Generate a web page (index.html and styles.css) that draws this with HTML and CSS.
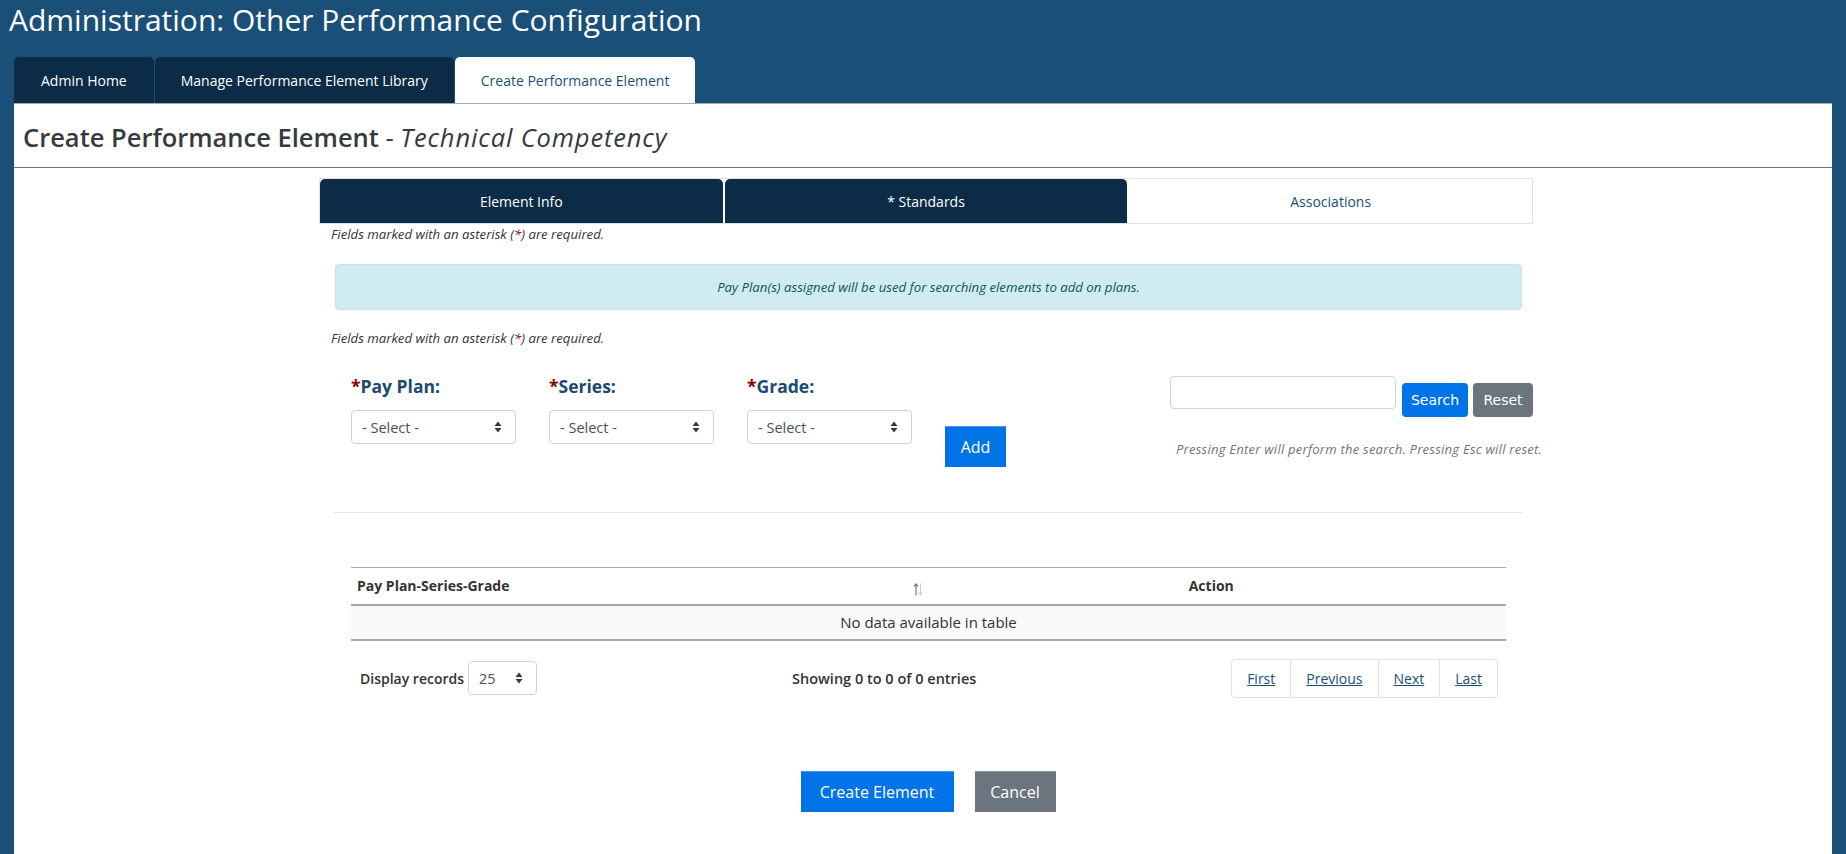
FILE: index.html
```html
<!DOCTYPE html>
<html lang="en">
<head>
<meta charset="utf-8">
<title>Administration: Other Performance Configuration</title>
<link rel="stylesheet" href="styles.css">
</head>
<body>
<header class="app-header">
  <h1 class="app-title">Administration: Other Performance Configuration</h1>
  <nav class="main-tabs">
    <a class="main-tab" href="#">Admin Home</a>
    <a class="main-tab" href="#">Manage Performance Element Library</a>
    <a class="main-tab active" href="#">Create Performance Element</a>
  </nav>
</header>

<main class="panel">
  <h2 class="panel-heading">Create Performance Element <span class="dash">-</span> <em>Technical Competency</em></h2>

  <section class="wizard">
    <nav class="step-tabs">
      <a class="step-tab done" href="#">Element Info</a>
      <a class="step-tab done" href="#">* Standards</a>
      <a class="step-tab" href="#">Associations</a>
    </nav>

    <p class="required-note first">Fields marked with an asterisk (<span class="req">*</span>) are required.</p>

    <div class="alert-info">Pay Plan(s) assigned will be used for searching elements to add on plans.</div>

    <p class="required-note second">Fields marked with an asterisk (<span class="req">*</span>) are required.</p>

    <div class="filter-row">
      <div class="field">
        <label class="field-label" for="payPlan"><span class="req">*</span>Pay Plan:</label>
        <div class="select-wrap">
          <select id="payPlan" class="form-select"><option>- Select -</option></select>
          <svg class="caret" width="8" height="12" viewBox="0 0 8 12"><path d="M4 0.5 L7.5 5 H0.5 Z M0.5 7 H7.5 L4 11.5 Z" fill="#343a40"/></svg>
        </div>
      </div>
      <div class="field">
        <label class="field-label" for="series"><span class="req">*</span>Series:</label>
        <div class="select-wrap">
          <select id="series" class="form-select"><option>- Select -</option></select>
          <svg class="caret" width="8" height="12" viewBox="0 0 8 12"><path d="M4 0.5 L7.5 5 H0.5 Z M0.5 7 H7.5 L4 11.5 Z" fill="#343a40"/></svg>
        </div>
      </div>
      <div class="field">
        <label class="field-label" for="grade"><span class="req">*</span>Grade:</label>
        <div class="select-wrap">
          <select id="grade" class="form-select"><option>- Select -</option></select>
          <svg class="caret" width="8" height="12" viewBox="0 0 8 12"><path d="M4 0.5 L7.5 5 H0.5 Z M0.5 7 H7.5 L4 11.5 Z" fill="#343a40"/></svg>
        </div>
      </div>
      <button class="btn btn-primary btn-add" type="button">Add</button>

      <div class="search-group">
        <div class="search-line">
          <input class="search-input" type="text" aria-label="Search">
          <button class="btn-sm btn-primary" type="button">Search</button>
          <button class="btn-sm btn-secondary" type="button">Reset</button>
        </div>
        <p class="search-hint">Pressing Enter will perform the search. Pressing Esc will reset.</p>
      </div>
    </div>

    <hr class="divider">

    <table class="grid">
      <thead>
        <tr>
          <th class="col-main">
            <div class="th-inner">
              <span>Pay Plan-Series-Grade</span>
              <svg class="sort" width="10" height="13" viewBox="0 0 10 13">
                <path d="M3 12.5 V1.5 M1 3.5 L3 1 L5 3.5" stroke="#6f6f6f" stroke-width="1.1" fill="none"/>
                <path d="M7.5 0.5 V11.5 M5.5 9.5 L7.5 12 L9.5 9.5" stroke="#c9ced3" stroke-width="1.1" fill="none"/>
              </svg>
            </div>
          </th>
          <th class="col-action">Action</th>
        </tr>
      </thead>
      <tbody>
        <tr class="empty-row"><td colspan="2">No data available in table</td></tr>
      </tbody>
    </table>

    <div class="table-footer">
      <div class="page-length">
        <span>Display records</span>
        <div class="select-wrap small">
          <select class="form-select"><option>25</option></select>
          <svg class="caret" width="8" height="12" viewBox="0 0 8 12"><path d="M4 0.5 L7.5 5 H0.5 Z M0.5 7 H7.5 L4 11.5 Z" fill="#343a40"/></svg>
        </div>
      </div>
      <div class="page-info">Showing 0 to 0 of 0 entries</div>
      <nav class="pager">
        <a href="#">First</a>
        <a href="#">Previous</a>
        <a href="#">Next</a>
        <a href="#">Last</a>
      </nav>
    </div>

    <div class="form-actions">
      <button class="btn btn-primary btn-create" type="button">Create Element</button>
      <button class="btn btn-secondary btn-cancel" type="button">Cancel</button>
    </div>
  </section>
</main>
</body>
</html>
```

FILE: styles.css
```css
* {
  box-sizing: border-box;
}

html,
body {
  height: 100%;
}

body {
  margin: 0;
  display: flex;
  flex-direction: column;
  background: #1a5077;
  font-family: "Open Sans", "Noto Sans", sans-serif;
  color: #333;
}

/* ---------- header ---------- */
.app-title {
  margin: 0;
  padding-left: 9px;
  font-size: 30px;
  font-weight: 400;
  line-height: 40px;
  color: #fff;
}

.main-tabs {
  display: flex;
  margin: 17px 0 0 14px;
}

.main-tab {
  height: 46px;
  padding: 0 26px;
  display: flex;
  align-items: center;
  background: #0b2b46;
  color: #fff;
  font-size: 14px;
  text-decoration: none;
  border-radius: 5px 5px 0 0;
}

.main-tab + .main-tab {
  margin-left: 1px;
}

.main-tab:first-child {
  padding: 0 27px;
}

.main-tab.active {
  background: #fff;
  color: #1a4f78;
}

/* ---------- panel ---------- */
.panel {
  flex: 1;
  margin: 0 14px;
  background: #fff;
  border-top: 1px solid #a3acb4;
}

.panel-heading {
  margin: 0;
  padding: 16px 9px 12px;
  font-size: 25.5px;
  font-weight: 600;
  line-height: 35px;
  color: #343a40;
  border-bottom: 1px solid #6c757d;
}

.panel-heading .dash,
.panel-heading em {
  font-weight: 400;
}

.panel-heading em {
  letter-spacing: 0.85px;
}

.wizard {
  width: 1214px;
  margin: 10px 0 0 305px;
}

/* ---------- step tabs ---------- */
.step-tabs {
  display: flex;
  gap: 2px;
  border: 1px solid #dee2e6;
}

.step-tab {
  flex: 1;
  height: 44px;
  display: flex;
  align-items: center;
  justify-content: center;
  font-size: 14px;
  color: #1a4f78;
  text-decoration: none;
  background: #fff;
  border-radius: 5px 5px 0 0;
}

.step-tab.done {
  background: #0b2b46;
  color: #fff;
}

/* ---------- notes & alert ---------- */
.required-note {
  margin: 0;
  padding-left: 12px;
  font-size: 13.2px;
  font-style: italic;
  line-height: 20px;
  color: #333;
}

.required-note.second {
  margin-top: 18px;
}

.req {
  color: #8b0000;
}

.alert-info {
  height: 46px;
  margin: 20px 11px 0 16px;
  display: flex;
  align-items: center;
  justify-content: center;
  background: #d1ecf1;
  border: 1px solid #bee5eb;
  border-radius: 4px;
  color: #0c5460;
  font-size: 13.2px;
  font-style: italic;
}

/* ---------- filter row ---------- */
.filter-row {
  display: flex;
  align-items: flex-start;
  gap: 33px;
  margin: 26px 0 0 32px;
}

.field {
  width: 165px;
}

.field-label {
  display: block;
  font-size: 17.5px;
  font-weight: 700;
  line-height: 24px;
  color: #1b4a71;
}

.select-wrap {
  position: relative;
  margin-top: 12px;
}

.form-select {
  display: block;
  width: 100%;
  height: 34px;
  padding: 0 26px 0 10px;
  appearance: none;
  -webkit-appearance: none;
  background: #fff;
  border: 1px solid #ced4da;
  border-radius: 4px;
  font-family: inherit;
  font-size: 14.5px;
  color: #495057;
}

.caret {
  position: absolute;
  right: 14px;
  top: 11px;
  pointer-events: none;
}

.btn {
  height: 41px;
  padding: 0 15px;
  border: 0;
  border-top: 1px solid rgba(255, 255, 255, 0.25);
  font-family: inherit;
  font-size: 16px;
  color: #fff;
  cursor: pointer;
}

.btn-primary {
  background: #0073e6;
}

.btn-secondary {
  background: #6c757d;
}

.btn-add {
  width: 61px;
  margin-top: 52px;
}

.search-group {
  margin-left: auto;
  width: 363px;
}

.search-line {
  display: flex;
  align-items: flex-start;
}

.search-input {
  width: 226px;
  height: 33px;
  margin-top: 2px;
  border: 1px solid #ced4da;
  border-radius: 4px;
}

.btn-sm {
  height: 34px;
  margin-top: 9px;
  border: 0;
  border-radius: 4px;
  font-family: "DejaVu Sans", sans-serif;
  font-size: 14px;
  color: #fff;
}

.btn-sm.btn-primary {
  width: 66px;
  margin-left: 6px;
}

.btn-sm.btn-secondary {
  width: 60px;
  margin-left: 5px;
}

.search-hint {
  margin: 23px 0 0;
  padding-left: 6px;
  white-space: nowrap;
  font-size: 13px;
  font-style: italic;
  letter-spacing: 0.25px;
  line-height: 18px;
  color: #6c757d;
}

.divider {
  margin: 45px 11px 0 15px;
  border: 0;
  border-top: 1px solid #e3e3e3;
}

/* ---------- table ---------- */
.grid {
  width: 1155px;
  margin: 54px 0 0 32px;
  border-collapse: collapse;
  border-top: 1px solid #a8a8a8;
  font-size: 14px;
}

.grid th {
  height: 37px;
  padding: 0 6px;
  font-weight: 700;
  text-align: left;
  color: #333;
  border-bottom: 2px solid #a8a8a8;
}

.col-main {
  width: 50%;
}

.th-inner {
  display: flex;
  align-items: center;
  justify-content: space-between;
}

.sort {
  margin: 8px 0 0 0;
}

.grid th.col-action {
  text-align: center;
  padding-right: 18px;
}

.empty-row td {
  height: 35px;
  text-align: center;
  font-size: 15px;
  background: #f9f9f9;
  color: #333;
  border-bottom: 2px solid #a8a8a8;
}

/* ---------- table footer ---------- */
.table-footer {
  display: grid;
  grid-template-columns: 432px 1fr auto;
  align-items: center;
  width: 1155px;
  margin: 18px 0 0 32px;
  padding: 0 8px 0 9px;
  font-size: 14px;
}

.page-length {
  display: flex;
  align-items: center;
  gap: 4px;
  font-weight: 600;
}

.select-wrap.small {
  width: 69px;
  margin-top: 0;
}

.page-info {
  font-size: 14.5px;
  font-weight: 600;
}

.pager {
  display: flex;
  height: 39px;
  border: 1px solid #dee2e6;
  border-radius: 4px;
}

.pager a {
  display: flex;
  align-items: center;
  padding: 0 15px;
  color: #1a4f78;
  text-decoration: underline;
}

.pager a + a {
  border-left: 1px solid #dee2e6;
}

/* ---------- form actions ---------- */
.form-actions {
  display: flex;
  justify-content: center;
  gap: 21px;
  margin-top: 73px;
  padding-left: 4px;
}

.btn-create {
  width: 153px;
}

.btn-cancel {
  width: 81px;
}
```
